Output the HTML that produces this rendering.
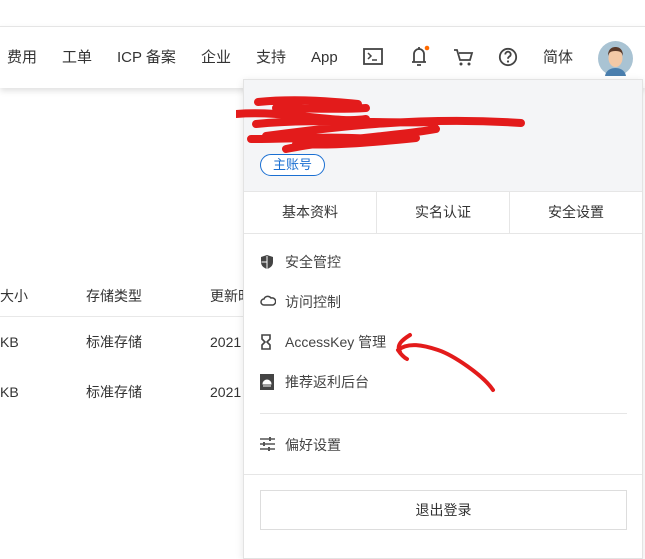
<!DOCTYPE html>
<html><head><meta charset="utf-8"><style>
*{margin:0;padding:0;box-sizing:border-box}
body{width:645px;height:546px;overflow:hidden;background:#fff;font-family:"Liberation Sans","Noto Sans CJK SC",sans-serif;color:#333;position:relative}
.a{position:absolute;white-space:nowrap;line-height:20px}
.nav{position:absolute;left:0;top:26px;width:645px;height:62px;background:#fff;border-top:1px solid #e5e5e5;box-shadow:0 3px 6px rgba(0,0,0,.12)}
.nav .a{font-size:15px;top:21px;color:#333}
.tb{font-size:14px;color:#333}
.panel{position:absolute;left:243px;top:79px;width:400px;height:480px;background:#fff;border:1px solid #e3e3e3;box-shadow:0 2px 8px rgba(0,0,0,.1)}
.mi{position:absolute;left:41px;font-size:14px;color:#444;line-height:20px}
.ic{position:absolute;left:16px}
</style></head><body>
<div class="a tb" style="left:0;top:286px">大小</div>
<div class="a tb" style="left:86px;top:286px">存储类型</div>
<div class="a tb" style="left:210px;top:286px">更新时</div>
<div class="a" style="left:0;top:316px;width:243px;height:1px;background:#e8e8e8"></div>
<div class="a tb" style="left:0;top:332px">KB</div>
<div class="a tb" style="left:86px;top:332px">标准存储</div>
<div class="a tb" style="left:210px;top:332px">2021</div>
<div class="a tb" style="left:0;top:382px">KB</div>
<div class="a tb" style="left:86px;top:382px">标准存储</div>
<div class="a tb" style="left:210px;top:382px">2021</div>
<div class="nav">
<div class="a" style="left:7px">费用</div>
<div class="a" style="left:62px">工单</div>
<div class="a" style="left:117px">ICP 备案</div>
<div class="a" style="left:201px">企业</div>
<div class="a" style="left:256px">支持</div>
<div class="a" style="left:311px">App</div>
<svg class="a" style="left:362px;top:20px" width="22" height="20" viewBox="0 0 22 20"><rect x="2" y="2" width="18" height="15" fill="none" stroke="#444" stroke-width="1.8"/><path d="M6 6l3 3-3 3M10 13h5" stroke="#444" stroke-width="1.5" fill="none"/></svg>
<svg class="a" style="left:408px;top:17px" width="22" height="24" viewBox="0 0 22 24"><path d="M6 18V10a5 5 0 0110 0v8M4 18h14M9 21h4M11 3v2" stroke="#444" stroke-width="1.8" fill="none"/><circle cx="19" cy="4" r="2.3" fill="#ff6a00"/></svg>
<svg class="a" style="left:452px;top:20px" width="22" height="20" viewBox="0 0 22 20"><path d="M2 3h3l3 10h10l2-7H7" stroke="#444" stroke-width="1.8" fill="none"/><circle cx="9" cy="17" r="1.5" fill="#444"/><circle cx="17" cy="17" r="1.5" fill="#444"/></svg>
<svg class="a" style="left:498px;top:20px" width="20" height="20" viewBox="0 0 20 20"><circle cx="10" cy="10" r="8.2" fill="none" stroke="#444" stroke-width="1.8"/><path d="M7.3 7.5a2.7 2.7 0 115 1.3c-1 .9-2.3 1.3-2.3 2.9" stroke="#444" stroke-width="1.8" fill="none"/><circle cx="10" cy="14.5" r="1.1" fill="#444"/></svg>
<div class="a" style="left:543px">简体</div>
<svg class="a" style="left:598px;top:14px" width="35" height="35" viewBox="0 0 35 35"><circle cx="17.5" cy="17.5" r="17.5" fill="#a9c3d3"/><path d="M7 35c1-6 6-8 10.5-8S27 29 28 35z" fill="#4a7fae"/><ellipse cx="17.5" cy="17" rx="7" ry="9" fill="#f3c9a6"/><path d="M10 15c0-7 4-9 7.5-9s7.5 2 7.5 9c-1-3-2-5-7.5-5S11 12 10 15z" fill="#5a3a2a"/></svg>
</div>
<div class="panel">
<div class="a" style="left:0;top:0;width:398px;height:111px;background:#f4f5f7"></div>
<div class="a" style="left:16px;top:74px;height:22px;width:65px;border:1px solid #1a6fd2;border-radius:11px;color:#1a6fd2;font-size:13px;text-align:center;line-height:20px;background:#fff">主账号</div>
<svg class="a" style="left:-8px;top:14px" width="300" height="70"><g stroke="#e31b1b" stroke-width="8" fill="none" stroke-linecap="round"><path d="M22 8c40-4 80 0 100 2M0 20c50-4 100 10 130 5M20 30c60-6 120 0 180-2M30 42c60-8 150-20 255-13M50 55c50-10 120-14 150-20M15 45c40 0 80-3 120 0M40 14c30 0 60 2 90 0M60 50c40 2 80-2 120-6"/></g></svg>
<div class="a" style="left:0;top:111px;width:398px;height:1px;background:#e6e6e6"></div>
<div class="a" style="left:0;top:153px;width:398px;height:1px;background:#e6e6e6"></div>
<div class="a" style="left:132px;top:112px;width:1px;height:41px;background:#e6e6e6"></div>
<div class="a" style="left:265px;top:112px;width:1px;height:41px;background:#e6e6e6"></div>
<div class="a" style="left:0;top:122px;width:132px;text-align:center;font-size:14px">基本资料</div>
<div class="a" style="left:133px;top:122px;width:132px;text-align:center;font-size:14px">实名认证</div>
<div class="a" style="left:266px;top:122px;width:132px;text-align:center;font-size:14px">安全设置</div>
<svg class="ic" style="top:174px" width="14" height="16" viewBox="0 0 14 16"><path d="M7 1l6 2v5c0 4-3 6-6 7-3-1-6-3-6-7V3z" fill="#444"/><path d="M7 2v13M1.5 8H7" stroke="#fff" stroke-width="1"/></svg>
<div class="mi" style="top:172px">安全管控</div>
<svg class="ic" style="top:215px" width="16" height="12" viewBox="0 0 16 12"><path d="M4 10a3 3 0 010-6 4 4 0 017-1 3 3 0 012 7z" fill="none" stroke="#444" stroke-width="1.5"/></svg>
<div class="mi" style="top:212px">访问控制</div>
<svg class="ic" style="top:254px" width="12" height="16" viewBox="0 0 12 16"><path d="M2 1h8v4l-3 3 3 3v4H2v-4l3-3-3-3z" fill="none" stroke="#444" stroke-width="1.6"/></svg>
<div class="mi" style="top:252px">AccessKey 管理</div>
<svg class="ic" style="top:294px" width="14" height="16" viewBox="0 0 14 16"><rect x="0" y="0" width="14" height="16" fill="#444"/><path d="M3 10a4 4 0 018 0zM3 12h8" stroke="#fff" fill="#fff" stroke-width="1"/></svg>
<div class="mi" style="top:292px">推荐返利后台</div>
<div class="a" style="left:16px;top:333px;width:367px;height:1px;background:#e6e6e6"></div>
<svg class="ic" style="top:357px" width="15" height="14" viewBox="0 0 15 14"><path d="M0 2h15M0 7h15M0 12h15" stroke="#555" stroke-width="1.5"/><rect x="9" y="0" width="2" height="4" fill="#555"/><rect x="3" y="5" width="2" height="4" fill="#555"/><rect x="8" y="10" width="2" height="4" fill="#555"/></svg>
<div class="mi" style="top:355px">偏好设置</div>
<div class="a" style="left:0;top:394px;width:398px;height:1px;background:#e6e6e6"></div>
<div class="a" style="left:16px;top:410px;width:367px;height:40px;border:1px solid #ddd;text-align:center;line-height:38px;font-size:14px">退出登录</div>
</div>
<svg class="a" style="left:390px;top:330px" width="110" height="70"><path d="M8 20c10-8 25-5 40 0s45 25 55 40M20 5c-8 5-14 10-10 17M8 20c2 3 5 7 9 9" stroke="#e31b1b" stroke-width="4" fill="none" stroke-linecap="round"/></svg>
</body></html>
